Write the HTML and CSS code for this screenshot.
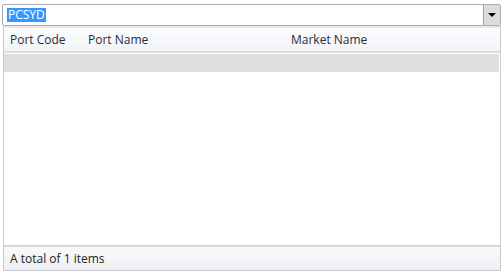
FILE: index.html
```html
<!DOCTYPE html>
<html lang="en">
<head>
  <meta charset="UTF-8">
  <title>Port picker</title>
  <link rel="stylesheet" href="styles.css">
</head>
<body>
  <div class="combo">
    <div class="combo-input">
      <span class="sel">PCSYD</span>
    </div>
    <div class="combo-btn"><span class="arrow"></span></div>
  </div>

  <div class="panel">
    <div class="grid-head">
      <div class="col code">Port Code</div>
      <div class="col name">Port Name</div>
      <div class="col market">Market Name</div>
    </div>
    <div class="grid-body">
      <div class="row"></div>
    </div>
    <div class="grid-foot">A total of 1 items</div>
  </div>
</body>
</html>
```

FILE: styles.css
```css
body {
  margin: 0;
  width: 504px;
  height: 273px;
  overflow: hidden;
  background: #fff;
  font-family: "Open Sans", "Liberation Sans", sans-serif;
  font-size: 12px;
  color: #1e1e1e;
}
.combo {
  display: flex;
  margin: 4px 3px 0 2px;
  height: 22px;
  border: 1px solid #abadb3;
  border-radius: 2px;
  box-sizing: border-box;
}
.combo-input {
  flex: 1;
  display: flex;
  align-items: center;
  padding-left: 4px;
}
.sel {
  background: #3399ff;
  color: #fff;
  line-height: 14px;
  padding: 0 1px;
}
.combo-btn {
  width: 16px;
  border-left: 1px solid #a0a0a0;
  background: #dcdcdc;
  display: flex;
  align-items: center;
  justify-content: center;
}
.arrow {
  width: 0;
  height: 0;
  border-left: 4px solid transparent;
  border-right: 4px solid transparent;
  border-top: 4px solid #000;
}
.panel {
  margin: 0 3px 0 3px;
  height: 245px;
  border: 1px solid #c9c9d6;
  border-top: none;
  box-sizing: border-box;
  display: flex;
  flex-direction: column;
}
.grid-head {
  display: flex;
  height: 23px;
  align-items: center;
  background: linear-gradient(#fdfdfe, #f1f3f7);
  border-top: 2px solid #e8e8ee;
  border-bottom: 2px solid #dcdce4;
  color: #2a2a3a;
}
.col.code { width: 78px; padding-left: 6px; }
.col.name { width: 203px; }
.grid-body {
  flex: 1;
  padding-top: 1px;
}
.row {
  height: 18px;
  background: #dedede;
  margin-right: 1px;
}
.grid-foot {
  height: 23px;
  line-height: 23px;
  padding-left: 6px;
  border-top: 2px solid #d6d6de;
  background: linear-gradient(#f8f9fa, #eef0f3);
}
```
